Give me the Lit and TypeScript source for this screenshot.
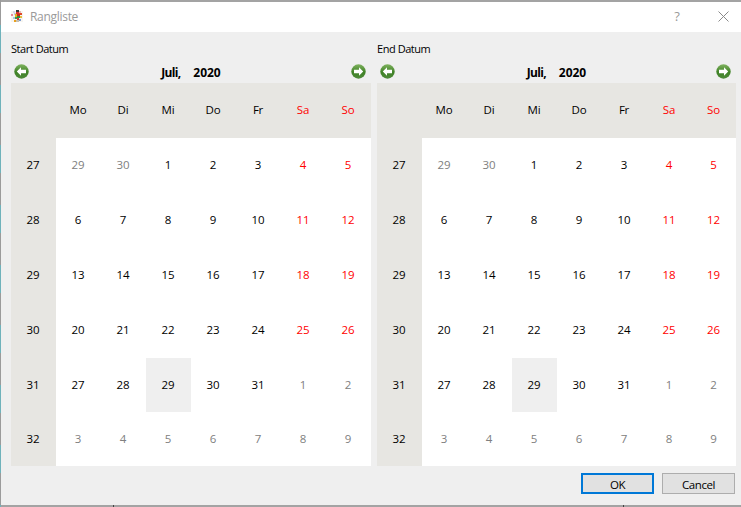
import { LitElement, html, css, svg } from "lit";
import { customElement } from "lit/decorators.js";

const HEAD = ["Mo", "Di", "Mi", "Do", "Fr", "Sa", "So"];
const WEEKS: [number, number[]][] = [
  [27, [29, 30, 1, 2, 3, 4, 5]],
  [28, [6, 7, 8, 9, 10, 11, 12]],
  [29, [13, 14, 15, 16, 17, 18, 19]],
  [30, [20, 21, 22, 23, 24, 25, 26]],
  [31, [27, 28, 29, 30, 31, 1, 2]],
  [32, [3, 4, 5, 6, 7, 8, 9]],
];

const LOGO: [number, number, number, number, string][] = [
  [0, 1, 12, 11, "#f7f5f0"],
  [2, 1, 2, 2, "#d8d8e8"],
  [5, 0, 3, 2, "#3a3a3a"],
  [8, 1, 2, 2, "#e8b8b8"],
  [0, 4, 2, 2, "#e58a9a"],
  [3, 3, 2, 2, "#c9c9d6"],
  [5, 2, 3, 2, "#d8332c"],
  [8, 3, 3, 2, "#e04a2a"],
  [4, 4, 2, 3, "#e3b420"],
  [6, 4, 3, 2, "#c8281f"],
  [4, 7, 2, 2, "#3f9a4a"],
  [6, 6, 3, 2, "#2f8f3f"],
  [9, 6, 2, 2, "#e3c040"],
  [2, 7, 2, 2, "#b0c8e0"],
  [6, 8, 2, 2, "#d8332c"],
  [3, 10, 2, 2, "#e8a020"],
  [5, 10, 3, 2, "#c8c0b0"],
  [8, 9, 2, 2, "#7a9ad0"],
];

const arrow = (dir: "l" | "r") => html`<svg class="arrow" width="15" height="15" viewBox="0 0 15 15">
  <defs>
    <linearGradient id="g" x1="0" y1="0" x2="0" y2="1">
      <stop offset="0" stop-color="#7fb25f"></stop>
      <stop offset=".55" stop-color="#3f8226"></stop>
      <stop offset="1" stop-color="#4f8a3a"></stop>
    </linearGradient>
  </defs>
  <circle cx="7.5" cy="7.5" r="7.2" fill="url(#g)"></circle>
  ${dir === "l"
    ? svg`<path d="M2.8 7.5L7 3.2V5.8H12V9.2H7V11.8Z" fill="#fff"></path>`
    : svg`<path d="M12.2 7.5L8 3.2V5.8H3V9.2H8V11.8Z" fill="#fff"></path>`}
</svg>`;

@customElement("app-root")
export class AppRoot extends LitElement {
  static styles = css`
    :host {
      display: block;
      position: relative;
      width: 741px;
      height: 507px;
      overflow: hidden;
      background: repeating-linear-gradient(#9b9b9b 0 25px, #6fb2bb 25px 53px, #9b9b9b 53px 60px);
      font-family: "Open Sans", "Noto Sans", sans-serif;
      font-size: 11.5px;
      letter-spacing: -0.2px;
      color: #000;
    }
    .win {
      height: 507px;
      margin-left: 1px;
      box-sizing: border-box;
      background: #efefef;
      border-top: 2px solid #a3a3a3;
      border-bottom: 2px solid #a3a3a3;
      display: flex;
      flex-direction: column;
    }
    .tick {
      position: absolute;
      bottom: 0;
      width: 1px;
      height: 2px;
      background: #444;
    }
    .t1 { left: 113px; }
    .t2 { left: 623px; }
    .title {
      height: 30px;
      background: #fff;
      display: flex;
      align-items: center;
      padding-left: 10px;
      color: #9a9a9a;
      font-size: 12px;
      letter-spacing: -0.3px;
      flex: none;
    }
    .title .name { margin-top: -1px; }
    .logo { margin-right: 7px; flex: none; margin-top: -1px; }
    .title .grow { flex: 1; }
    .q { width: 14px; color: #9a9a9a; font-size: 13px; margin-right: 34px; margin-top: -2px; text-align: center; }
    .x { margin-right: 12px; margin-top: -1px; }
    .panes {
      display: flex;
      gap: 6px;
      padding: 0 4px 0 10px;
      flex: none;
    }
    .label {
      height: 31px;
      padding-top: 9px;
      box-sizing: border-box;
      line-height: 16px;
      font-size: 11px;
      letter-spacing: -0.45px;
      white-space: nowrap;
    }
    .nav {
      height: 20px;
      box-sizing: border-box;
      display: flex;
      align-items: flex-start;
      justify-content: space-between;
      padding: 1px 5px 0 3px;
    }
    .arrow { flex: none; }
    .month {
      font-weight: 700;
      font-size: 12px;
      line-height: 16px;
      margin: 1px 0 0 2px;
      display: flex;
      gap: 12px;
      white-space: nowrap;
      letter-spacing: 0;
    }
    .month .m { letter-spacing: -0.7px; width: 20px; }
    .grid {
      display: grid;
      grid-template-columns: repeat(8, 45px);
      grid-template-rows: 55px 55px 55px 55px 55px 54px 54px;
      background: #fff;
    }
    .pane.second .grid { grid-template-columns: repeat(7, 45px) 44px; }
    .c {
      display: flex;
      align-items: center;
      justify-content: center;
      padding: 0 1px 2px 0;
    }
    .h { background: #e7e6e2; }
    .red { color: #ff0000; }
    .gray { color: #808080; }
    .sel { background: #efefef; }
    .buttons {
      display: flex;
      justify-content: flex-end;
      gap: 8px;
      padding: 7px 6px 0 0;
    }
    .btn {
      width: 73px;
      height: 21px;
      box-sizing: border-box;
      background: #e1e1e1;
      border: 1px solid #adadad;
      display: flex;
      align-items: center;
      justify-content: center;
      font-size: 11.5px;
      letter-spacing: -0.4px;
      padding-top: 1px;
    }
    .btn.def { border: 2px solid #0078d7; }
  `;

  private pane(label: string, second: boolean) {
    return html`<div class="pane ${second ? "second" : ""}">
      <div class="label">${label}</div>
      <div class="nav">
        ${arrow("l")}
        <div class="month"><span class="m">Juli,</span><span>2020</span></div>
        ${arrow("r")}
      </div>
      <div class="grid">
        <div class="c h"></div>
        ${HEAD.map((d, i) => html`<div class="c h ${i > 4 ? "red" : ""}">${d}</div>`)}
        ${WEEKS.map(([w, days], r) => html`
          <div class="c h">${w}</div>
          ${days.map((d, i) => {
            const out = (r === 0 && i < 2) || (r === 4 && i > 4) || r === 5;
            const cls = out ? "gray" : i > 4 ? "red" : "";
            const sel = r === 4 && i === 2 ? "sel" : "";
            return html`<div class="c ${cls} ${sel}">${d}</div>`;
          })}
        `)}
      </div>
    </div>`;
  }

  render() {
    return html`<div class="win">
      <div class="title">
        <svg class="logo" width="12" height="13" viewBox="0 0 12 13">
          ${LOGO.map(([x, y, w, h, f]) => svg`<rect x=${x} y=${y} width=${w} height=${h} fill=${f}></rect>`)}
        </svg>
        <span class="name">Rangliste</span>
        <span class="grow"></span>
        <span class="q">?</span>
        <svg class="x" width="11" height="11" viewBox="0 0 11 11">
          <path d="M.5.5l10 10M10.5.5l-10 10" stroke="#8a8a8a" fill="none"></path>
        </svg>
      </div>
      <div class="panes">${this.pane("Start Datum", false)}${this.pane("End Datum", true)}</div>
      <div class="buttons">
        <div class="btn def">OK</div>
        <div class="btn">Cancel</div>
      </div>
    </div>
    <div class="tick t1"></div>
    <div class="tick t2"></div>`;
  }
}
